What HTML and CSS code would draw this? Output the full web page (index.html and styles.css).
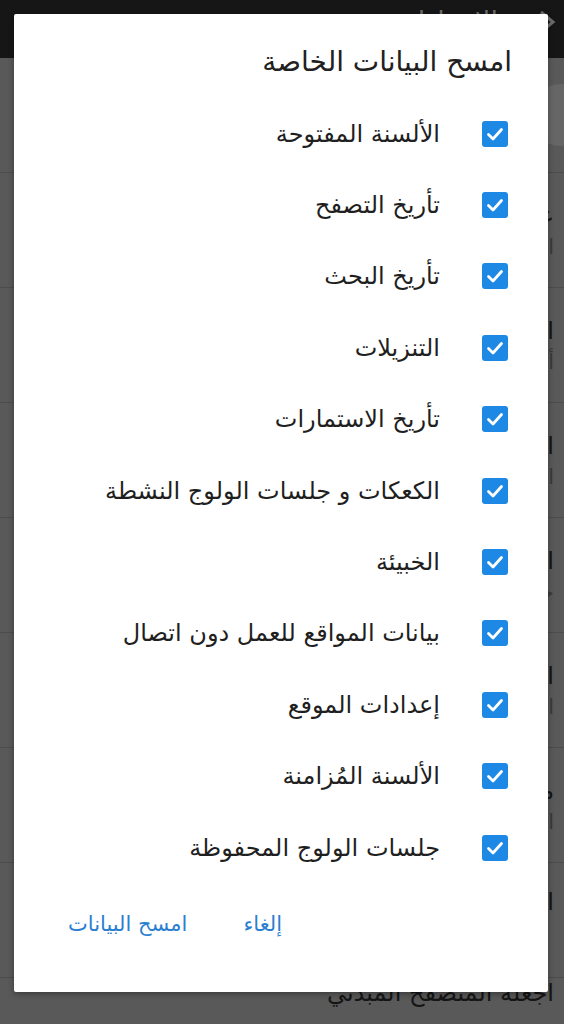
FILE: index.html
```html
<!DOCTYPE html>
<html lang="ar" dir="rtl">
<head>
<meta charset="utf-8">
<link rel="stylesheet" href="styles.css">
</head>
<body>
<div class="page">
  <header class="topbar">
    <svg class="back" width="18" height="26" viewBox="0 0 18 26"><path d="M3 3 L15 13 L3 23" fill="none" stroke="#6d6d6d" stroke-width="3"/></svg>
    <span class="topbar-title">الإعدادات</span>
  </header>
  <div class="rows">
    <div class="row row-avatar"><span class="avatar"></span></div>
    <div class="row"><div class="r-title">عام</div><div class="r-sub">الرئيسية</div></div>
    <div class="row"><div class="r-title">البحث</div><div class="r-sub">أضف</div></div>
    <div class="row"><div class="r-title">التتبع</div><div class="r-sub">التلقائي</div></div>
    <div class="row"><div class="r-title">الإشعار</div><div class="r-sub">حدد</div></div>
    <div class="row"><div class="r-title">المظهر</div><div class="r-sub">الداكن</div></div>
    <div class="row"><div class="r-title">متقدم</div><div class="r-sub">اسم</div></div>
    <div class="row row-single"><div class="r-title">امسح</div></div>
    <div class="row row-last"><div class="r-title">اجعله المتصفح المبدئي</div></div>
  </div>

  <div class="dialog">
    <h1 class="d-title">امسح البيانات الخاصة</h1>
    <ul class="d-list">
      <li class="d-item"><span class="cb"><svg width="26" height="26" viewBox="0 0 26 26"><path d="M6.5 13.5 L11 18 L19.5 8.5" fill="none" stroke="#fff" stroke-width="2.8" stroke-linecap="round" stroke-linejoin="round"/></svg></span><span class="d-label">الألسنة المفتوحة</span></li>
      <li class="d-item"><span class="cb"><svg width="26" height="26" viewBox="0 0 26 26"><path d="M6.5 13.5 L11 18 L19.5 8.5" fill="none" stroke="#fff" stroke-width="2.8" stroke-linecap="round" stroke-linejoin="round"/></svg></span><span class="d-label">تأريخ التصفح</span></li>
      <li class="d-item"><span class="cb"><svg width="26" height="26" viewBox="0 0 26 26"><path d="M6.5 13.5 L11 18 L19.5 8.5" fill="none" stroke="#fff" stroke-width="2.8" stroke-linecap="round" stroke-linejoin="round"/></svg></span><span class="d-label">تأريخ البحث</span></li>
      <li class="d-item"><span class="cb"><svg width="26" height="26" viewBox="0 0 26 26"><path d="M6.5 13.5 L11 18 L19.5 8.5" fill="none" stroke="#fff" stroke-width="2.8" stroke-linecap="round" stroke-linejoin="round"/></svg></span><span class="d-label">التنزيلات</span></li>
      <li class="d-item"><span class="cb"><svg width="26" height="26" viewBox="0 0 26 26"><path d="M6.5 13.5 L11 18 L19.5 8.5" fill="none" stroke="#fff" stroke-width="2.8" stroke-linecap="round" stroke-linejoin="round"/></svg></span><span class="d-label">تأريخ الاستمارات</span></li>
      <li class="d-item"><span class="cb"><svg width="26" height="26" viewBox="0 0 26 26"><path d="M6.5 13.5 L11 18 L19.5 8.5" fill="none" stroke="#fff" stroke-width="2.8" stroke-linecap="round" stroke-linejoin="round"/></svg></span><span class="d-label">الكعكات و جلسات الولوج النشطة</span></li>
      <li class="d-item"><span class="cb"><svg width="26" height="26" viewBox="0 0 26 26"><path d="M6.5 13.5 L11 18 L19.5 8.5" fill="none" stroke="#fff" stroke-width="2.8" stroke-linecap="round" stroke-linejoin="round"/></svg></span><span class="d-label">الخبيئة</span></li>
      <li class="d-item"><span class="cb"><svg width="26" height="26" viewBox="0 0 26 26"><path d="M6.5 13.5 L11 18 L19.5 8.5" fill="none" stroke="#fff" stroke-width="2.8" stroke-linecap="round" stroke-linejoin="round"/></svg></span><span class="d-label">بيانات المواقع للعمل دون اتصال</span></li>
      <li class="d-item"><span class="cb"><svg width="26" height="26" viewBox="0 0 26 26"><path d="M6.5 13.5 L11 18 L19.5 8.5" fill="none" stroke="#fff" stroke-width="2.8" stroke-linecap="round" stroke-linejoin="round"/></svg></span><span class="d-label">إعدادات الموقع</span></li>
      <li class="d-item"><span class="cb"><svg width="26" height="26" viewBox="0 0 26 26"><path d="M6.5 13.5 L11 18 L19.5 8.5" fill="none" stroke="#fff" stroke-width="2.8" stroke-linecap="round" stroke-linejoin="round"/></svg></span><span class="d-label">الألسنة المُزامنة</span></li>
      <li class="d-item"><span class="cb"><svg width="26" height="26" viewBox="0 0 26 26"><path d="M6.5 13.5 L11 18 L19.5 8.5" fill="none" stroke="#fff" stroke-width="2.8" stroke-linecap="round" stroke-linejoin="round"/></svg></span><span class="d-label">جلسات الولوج المحفوظة</span></li>
    </ul>
    <div class="d-actions">
      <span class="btn">إلغاء</span>
      <span class="btn">امسح البيانات</span>
    </div>
  </div>
</div>
</body>
</html>
```

FILE: styles.css
```css
* { box-sizing: border-box; }
html, body {
  margin: 0;
  padding: 0;
  width: 564px;
  height: 1024px;
  overflow: hidden;
  background: #595959;
  font-family: "DejaVu Sans", "Noto Sans", sans-serif;
}
.page {
  position: relative;
  width: 564px;
  height: 1024px;
  overflow: hidden;
  background: #595959;
}
.topbar {
  height: 58px;
  background: #161616;
  display: flex;
  align-items: flex-start;
  padding: 6px 8px 0 0;
  gap: 40px;
}
.back { flex: none; margin-top: 3px; }
.topbar-title {
  color: #6c6c6c;
  font-size: 27px;
  line-height: 32px;
}
.rows { display: flex; flex-direction: column; }
.row {
  height: 115px;
  border-bottom: 1px solid #4c4c4c;
  padding: 28px 10px 0 0;
  display: flex;
  flex-direction: column;
  gap: 2px;
}
.row-avatar {
  position: relative;
  padding: 0;
}
.avatar {
  position: absolute;
  right: -28px;
  top: 26px;
  width: 62px;
  height: 62px;
  border-radius: 50%;
  background: #666;
}
.r-title {
  color: #151515;
  font-size: 24px;
  line-height: 30px;
  white-space: nowrap;
}
.r-sub {
  color: #3a3a3a;
  font-size: 21px;
  line-height: 28px;
  white-space: nowrap;
}
.row-single { padding-top: 24px; }
.row-last { padding-top: 0; border: none; }

.dialog {
  position: absolute;
  left: 14px;
  top: 14px;
  width: 534px;
  height: 978px;
  background: #fff;
  border-radius: 2px;
  box-shadow: 0 2px 6px rgba(0,0,0,0.35);
  padding: 28px 40px 0 40px;
  display: flex;
  flex-direction: column;
}
.d-title {
  margin: 0 -4px 0 0;
  font-weight: normal;
  font-size: 28px;
  line-height: 40px;
  color: #212121;
}
.d-list {
  list-style: none;
  margin: 16px 0 0 0;
  padding: 0;
  display: flex;
  flex-direction: column;
}
.d-item {
  height: 71.4px;
  display: flex;
  align-items: center;
  gap: 42px;
}
.cb {
  flex: none;
  width: 26px;
  height: 26px;
  background: #1e88e5;
  border-radius: 3px;
  display: flex;
}
.d-label {
  font-size: 24px;
  line-height: 32px;
  color: #1f1f1f;
  white-space: nowrap;
}
.d-actions {
  margin-top: 26px;
  display: flex;
  justify-content: flex-end;
  gap: 56px;
  padding-left: 14px;
}
.btn {
  color: #2b7fd0;
  font-size: 21px;
  line-height: 30px;
}
```
